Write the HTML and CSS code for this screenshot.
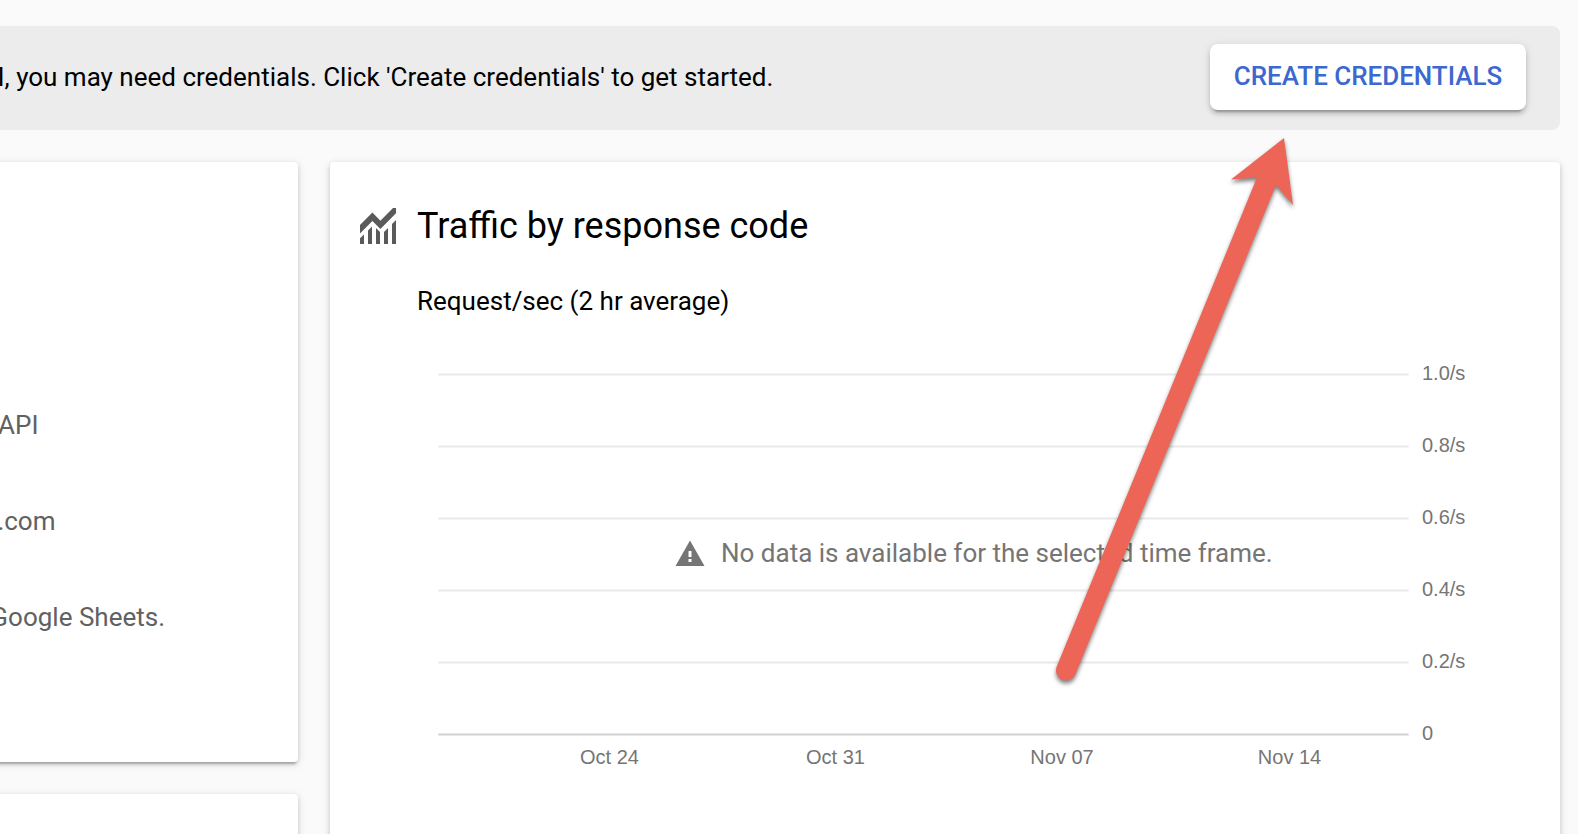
FILE: index.html
```html
<!DOCTYPE html>
<html lang="en">
<head>
<meta charset="utf-8">
<title>API overview</title>
<link rel="stylesheet" href="styles.css">
</head>
<body>
<main class="page">
  <section class="banner">
    <p class="banner-text">I, you may need credentials. Click 'Create credentials' to get started.</p>
    <button class="create" type="button">CREATE CREDENTIALS</button>
  </section>
  <div class="columns">
    <div class="side">
      <section class="card details">
        <p class="detail detail-name">API</p>
        <p class="detail detail-service">.com</p>
        <p class="detail detail-overview">Google Sheets.</p>
      </section>
      <section class="card next"></section>
    </div>
    <section class="card traffic">
      <header class="traffic-head">
        <svg class="traffic-icon" viewBox="0 0 36 36" width="36" height="36">
          <path d="M0 17 12.4 4.6 20.4 12.7 33 0H36V5.3L20.4 21 12.4 13 0 25.4ZM0 30.3 4 26.5V36H0ZM8 22.5 12 18.5V36H8ZM16 20 20 24V36H16ZM24 24 28 20V36H24ZM32 16 36 12V36H32Z"/>
        </svg>
        <h2 class="title">Traffic by response code</h2>
      </header>
      <p class="subtitle">Request/sec (2 hr average)</p>
      <div class="chart">
        <svg class="plot" viewBox="0 0 1060 420" width="1060" height="420">
          <path class="grid" d="M.3 14.5H970.6M.3 86.5H970.6M.3 158.5H970.6M.3 230.5H970.6M.3 302.5H970.6"/>
          <path class="axis" d="M.3 374.5H970.6"/>
          <g class="label">
            <text x="984" y="20">1.0/s</text>
            <text x="984" y="92">0.8/s</text>
            <text x="984" y="164">0.6/s</text>
            <text x="984" y="236">0.4/s</text>
            <text x="984" y="308">0.2/s</text>
            <text x="984" y="380">0</text>
          </g>
          <g class="label days">
            <text x="171.5" y="404">Oct 24</text>
            <text x="397.5" y="404">Oct 31</text>
            <text x="624" y="404">Nov 07</text>
            <text x="851.5" y="404">Nov 14</text>
          </g>
        </svg>
        <div class="empty">
          <svg class="warn" viewBox="0 0 30 26" width="30" height="26">
            <path fill-rule="evenodd" d="M15 .5 29.5 26H.5ZM13.5 11V17H16.5V11ZM13.5 19V22H16.5V19Z"/>
          </svg>
          <span class="empty-text">No data is available for the selected time frame.</span>
        </div>
      </div>
    </section>
  </div>
  <svg class="arrow" viewBox="1040 120 280 580" width="280" height="580">
    <path d="M1284 138 1231 179.5 1257 177.5 1056.8 666.6A10 10 0 0 0 1075.3 674.4L1276 185 1293 205Z"/>
  </svg>
</main>
</body>
</html>
```
FILE: styles.css
```css
* { box-sizing: border-box; }
body { margin: 0; background: #fafafa; font-family: Roboto, sans-serif; }
p, h2 { margin: 0; white-space: nowrap; }
.page {
  position: relative;
  height: 834px;
  padding: 26px 18px 0 0;
  overflow: hidden;
  display: flex;
  flex-direction: column;
  gap: 32px;
}
.banner {
  flex: none;
  height: 104px;
  padding: 0 34px 2px 0;
  display: flex;
  align-items: center;
  justify-content: space-between;
  background: #ececec;
  border-radius: 0 8px 8px 0;
}
.banner-text {
  margin-left: -2.5px;
  padding-bottom: 1px;
  font-size: 26px;
  line-height: 32px;
  color: #000;
}
.create {
  width: 316px;
  height: 66px;
  padding: 0 0 2px;
  border: 0;
  border-radius: 8px;
  background: #fff;
  color: #3c68d0;
  font: 500 26px/32px Roboto, sans-serif;
  letter-spacing: -.03px;
  white-space: nowrap;
  box-shadow: 0 6px 2px -4px rgba(0,0,0,.2), 0 4px 4px rgba(0,0,0,.14), 0 2px 10px rgba(0,0,0,.12);
}
.columns { flex: 1; display: flex; gap: 32px; }
.side { width: 298px; display: flex; flex-direction: column; gap: 32px; }
.card {
  background: #fff;
  border-radius: 4px;
  box-shadow: 0 4px 2px -2px rgba(0,0,0,.2), 0 2px 4px rgba(0,0,0,.14), 0 2px 10px rgba(0,0,0,.12);
}
/* The side cards run past the left edge of the window. */
.side .card { margin-left: -20px; padding-left: 20px; }
.side .details {
  flex: none;
  height: 600px;
  padding-top: 247px;
  display: flex;
  flex-direction: column;
  gap: 64px;
}
.detail {
  display: flex;
  justify-content: flex-end;
  font-size: 26px;
  line-height: 32px;
  color: #616161;
}
.detail-name { width: 38.5px; }
.detail-service { width: 55.5px; }
.detail-overview { width: 165px; }
.next { height: 200px; flex: none; }
.traffic { flex: 1; height: 740px; padding: 42px 0 0 30px; }
.traffic-head { display: flex; align-items: center; gap: 21px; height: 42px; }
.traffic-icon { margin-top: 2px; fill: #5a5a5a; }
.title { padding-top: 2px; font-size: 36px; line-height: 42px; font-weight: 400; color: #000; }
.subtitle {
  margin: 39px 0 0 57px;
  font-size: 26px;
  line-height: 32px;
  color: #000;
}
.chart { display: grid; margin: 43px 0 0 78px; }
.plot { grid-area: 1 / 1; display: block; }
.grid { stroke: #e9e9e9; stroke-width: 2; }
.axis { stroke: #d2d2d2; stroke-width: 2; }
.label { font: 20px "Liberation Sans", sans-serif; fill: #757575; }
.days { text-anchor: middle; }
.empty {
  grid-area: 1 / 1;
  display: flex;
  align-items: flex-start;
  gap: 16px;
  padding: 177px 0 0 237px;
  font-size: 26px;
  line-height: 32px;
  color: #757575;
  white-space: nowrap;
}
.warn { margin-top: 3px; fill: #757575; }
.arrow {
  position: absolute;
  left: 1040px;
  top: 120px;
  fill: #ec6556;
  filter: drop-shadow(0 3px 2px rgba(0,0,0,.5));
}
```
